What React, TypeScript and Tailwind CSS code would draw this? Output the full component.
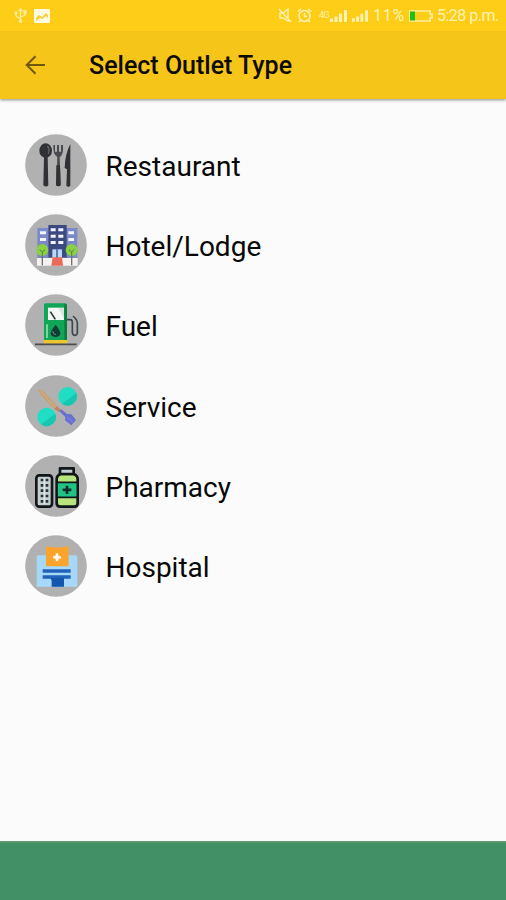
import type { ReactNode } from "react";

const font = "font-['Roboto','Liberation_Sans',sans-serif]";

function Restaurant() {
  return (
    <g fill="#303134" stroke="none">
      <ellipse cx="89" cy="74" rx="19" ry="22" />
      <path d="M94 60q8 9 3 23" stroke="#65666a" strokeWidth="4" fill="none" />
      <path d="M84 92h11l2 86q-7 7-15 0z" />
      <path d="M112 57h5v20h6V57h6v20h6V57h6q2 30-10 36l3 85q-7 6-13 0l3-85q-14-7-12-36z" fill="#4a4b4e" />
      <path d="M121 118h11l2 60q-7 6-14 0z" />
      <path d="M163 54q-16 30-17 72l7 4-2 49q6 6 12 0z" />
    </g>
  );
}

function Hotel() {
  return (
    <g>
      <path d="M64 66h34v92H64zM150 66h34v92h-34z" fill="#7b89c9" />
      <path d="M97 57h55v98H97z" fill="#3d4a80" />
      <g fill="#f2f5ff">
        <path d="M104 67h15v9h-15zM127 67h15v9h-15zM104 86h15v9h-15zM127 86h15v9h-15zM104 105h15v9h-15zM127 105h15v9h-15z" />
        <path d="M72 76h18v9H72zM72 96h18v9H72zM157 76h17v9h-17zM157 96h17v9h-17z" />
      </g>
      <path d="M109 130h29v26h-29z" fill="#b9d7f7" />
      <path d="M123 130v26" stroke="#3d4a80" strokeWidth="4" />
      <path d="M63 156h122v23H63z" fill="#f4f1f1" />
      <path d="M110 154h28l3 25h-35z" fill="#ed6a58" />
      <path d="M79 130v48M167 130v48" stroke="#77706c" strokeWidth="4" />
      <circle cx="79" cy="132" r="18" fill="#8bcf42" />
      <circle cx="167" cy="132" r="18" fill="#8bcf42" />
      <path d="M71 131l8 7 8-7M159 131l8 7 8-7M79 137v16M167 137v16" fill="none" stroke="#54813a" strokeWidth="3" />
    </g>
  );
}

function Fuel() {
  return (
    <g>
      <rect x="84" y="52" width="69" height="119" rx="5" fill="#11a657" />
      <path d="M145 53q8 0 8 7v110h-8z" fill="#078044" />
      <path d="M83 162h71v11H83z" fill="#f1c62c" />
      <path d="M96 65h48v37H96z" fill="#f4f7f4" />
      <path d="M127 66h17v32z" fill="#dae1df" />
      <path d="M103 77l15 23" stroke="#263b3a" strokeWidth="5" />
      <path d="M119 116q-15 18-15 26c0 15 29 15 29 0q0-8-14-26z" fill="#143c38" />
      <path d="M110 135q0 10 10 11" fill="none" stroke="#569978" strokeWidth="3" />
      <path d="M93 115v41" stroke="#b3f0c7" strokeWidth="4" />
      <path d="M153 101h10q6 0 6 8v29q0 10 8 10 7 0 7-9v-29q0-8-13-20" fill="none" stroke="#3a484c" strokeWidth="5" />
      <path d="M57 175h125" stroke="#494d50" strokeWidth="5" />
    </g>
  );
}

function Service() {
  return (
    <g>
      <circle cx="155" cy="88" r="28" fill="#20dec3" />
      <circle cx="92" cy="150" r="28" fill="#20dec3" />
      <path d="M181 78a28 28 0 01-43 32zM118 140a28 28 0 01-43 32z" fill="#18c7ae" />
      <path d="M67 67q8 0 16 6l45 49-9 8-43-44q-8-9-9-19z" fill="#c5a177" />
      <path d="M71 69l50 55" stroke="#cfac80" strokeWidth="4" />
      <path d="M122 118l13 10-7 8-12-11z" fill="#b88963" />
      <path d="M136 127l17 14 13 1 14 17-14 16-19-15 1-10-18-17z" fill="#686fd0" />
      <path d="M154 148l16 18" stroke="#757de4" strokeWidth="5" />
    </g>
  );
}

function Pharmacy() {
  return (
    <g>
      <rect x="61" y="85" width="47" height="94" rx="9" fill="#c6cecf" stroke="#111719" strokeWidth="8" />
      <path d="M85 93v78" stroke="#e1e8e8" strokeWidth="5" />
      <path d="M74 95h8v8h-8zM89 95h8v8h-8zM74 111h8v8h-8zM89 111h8v8h-8zM74 127h8v8h-8zM89 127h8v8h-8zM74 143h8v8h-8zM89 143h8v8h-8zM74 159h8v8h-8zM89 159h8v8h-8z" fill="#263236" />
      <path d="M134 81q-12 4-12 16v72q0 10 11 10h42q10 0 10-10V97q0-12-12-16z" fill="#b7e47d" stroke="#111719" strokeWidth="8" />
      <path d="M132 64h41v17h-41z" fill="#c1cdd2" stroke="#111719" strokeWidth="8" strokeLinejoin="round" />
      <path d="M123 106h61v45h-61z" fill="#20c586" stroke="#111719" strokeWidth="5" />
      <path d="M153 116v25M140 128.500h26" stroke="#15282a" strokeWidth="8" />
    </g>
  );
}

function Hospital() {
  return (
    <g>
      <path d="M67 85q-5 0-5 6v88h122V91q0-6-5-6z" fill="#a6d8fa" />
      <path d="M90 58q33 7 68 0v60H90z" fill="#fba42b" />
      <path d="M123 79v24M111 91h24" stroke="#fffaf0" strokeWidth="7" />
      <path d="M123 81l10 10-10 10-10-10z" fill="#fffaf0" />
      <path d="M80 127h84v10H80zM80 145h84v10H80z" fill="#2262b8" />
      <path d="M103 153h41v26h-37v-18z" fill="#1256ad" />
    </g>
  );
}

const outlets: { name: string; art: ReactNode }[] = [
  { name: "Restaurant", art: <Restaurant /> },
  { name: "Hotel/Lodge", art: <Hotel /> },
  { name: "Fuel", art: <Fuel /> },
  { name: "Service", art: <Service /> },
  { name: "Pharmacy", art: <Pharmacy /> },
  { name: "Hospital", art: <Hospital /> },
];

function Signal({ className }: { className: string }) {
  return (
    <svg className={className} viewBox="0 0 17 12" fill="#fff3b4">
      <path d="M0 8.500h3V12H0zM4.500 6.500h3V12h-3zM9 3.500h3V12H9zM14 0h3v12h-3z" />
    </svg>
  );
}

function StatusBar() {
  return (
    <div className="flex h-[31px] items-center bg-[#fdcd17] pr-[8px] pl-[14px] text-[#fff3b4]">
      <svg className="h-[15px] w-[13px]" viewBox="0 0 13 15" fill="none" stroke="#fff0a0" strokeWidth="1.300">
        <path d="M6.500 13V1M4.500 3l2-2 2 2M6.500 11L2 8V5M6.500 9L11 7V4" />
        <circle cx="6.500" cy="13" r="1.200" fill="#fff0a0" />
        <circle cx="2" cy="5" r="1" />
        <path d="M10 3h2v2h-2z" />
      </svg>
      <svg className="ml-[7px] h-[14px] w-[16px]" viewBox="0 0 16 14">
        <rect width="16" height="14" rx="1" fill="#fffbe1" />
        <path d="M2 12V9l3-3 3 2 4-4 2 2v6z" fill="#f7cf3d" />
        <path d="M2 12l4-3 2 1 4-3 2 2v3z" fill="#fffbe1" />
      </svg>
      <svg className="ml-auto h-[15px] w-[14px]" viewBox="0 0 14 15" fill="none" stroke="#fff3b4" strokeWidth="1.400">
        <path d="M2 5v5h3l5 3V1L5 5zM1 1l12 13" />
      </svg>
      <svg className="ml-[5px] h-[15px] w-[15px]" viewBox="0 0 15 15" fill="none" stroke="#fff3b4" strokeWidth="1.500">
        <circle cx="7.500" cy="8" r="5.500" />
        <path d="M.8 3.500L4 1M11 1l3.200 2.500M7.500 5v3.500H10M3.500 12.500L2 14M11.500 12.500L13 14" />
      </svg>
      <span className="ml-[7px] w-[11px] text-[9px] leading-none tracking-[-0.5px]">4G</span>
      <Signal className="h-[12px] w-[17px]" />
      <Signal className="ml-[5px] h-[12px] w-[16px]" />
      <span className="ml-[5px] w-[33px] text-[16px] leading-none tracking-[0.8px] whitespace-nowrap">11%</span>
      <svg className="ml-[3px] h-[12px] w-[24px]" viewBox="0 0 24 12">
        <path d="M1 1h20v3h2v4h-2v3H1z" fill="none" stroke="#fff0a0" strokeWidth="1.700" />
        <path d="M1 1.500h5v9H1z" fill="#1cc019" />
      </svg>
      <span className="ml-[4px] w-[61px] text-[16px] leading-none tracking-[-0.500px] whitespace-nowrap">5:28 p.m.</span>
    </div>
  );
}

export default function App() {
  return (
    <div className={`flex h-[900px] w-[506px] flex-col overflow-hidden bg-[#fbfbfb] text-[#080808] ${font}`}>
      <header className="z-10 h-[99px] shrink-0 bg-[#f6c51a] shadow-[0_1px_3px_rgba(0,0,0,0.45)]">
        <StatusBar />
        <div className="flex h-[67px] items-center pl-[25px]">
          <svg className="h-[20px] w-[21px]" viewBox="0 0 21 20" fill="none" stroke="#72570f" strokeWidth="2">
            <path d="M20 10H2M10.500 1.200L1.700 10l8.800 8.800" />
          </svg>
          <h1 className="ml-[43px] pt-[3px] text-[25px] leading-[30px] font-medium text-[#0d0a00]">Select Outlet Type</h1>
        </div>
      </header>
      <main className="flex-1 pt-[26px]">
        <ul>
          {outlets.map(({ name, art }) => (
            <li key={name} className="flex h-[80.200px] items-center pl-[25px]">
              <svg className="h-[62px] w-[62px] shrink-0" viewBox="27 24 186 186">
                <circle cx="120" cy="117" r="92.500" fill="#b1b1b1" />
                {art}
              </svg>
              <span className="ml-[18.500px] pt-[4px] text-[28px] leading-[34px]">{name}</span>
            </li>
          ))}
        </ul>
      </main>
      <footer className="h-[59px] shrink-0 border-t-2 border-[#60966f] bg-[#419066]" />
    </div>
  );
}
